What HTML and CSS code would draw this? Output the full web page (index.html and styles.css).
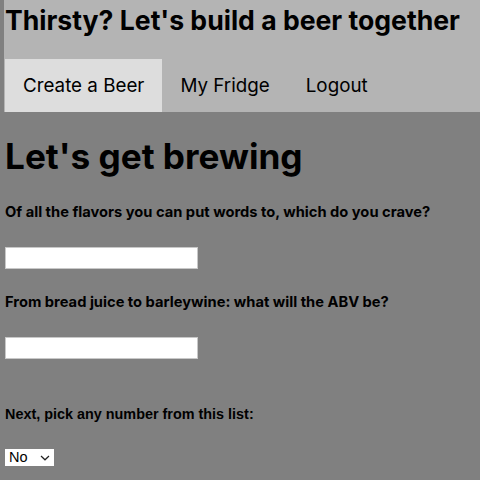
FILE: index.html
```html
<!DOCTYPE html>
<html lang="en">
<head>
<meta charset="utf-8">
<title>Let's get brewing</title>
<link rel="stylesheet" href="styles.css">
</head>
<body>
<header class="site-header">
  <h1 class="site-title">Thirsty? Let's build a beer together</h1>
  <nav class="site-nav">
    <a class="nav-link active" href="#">Create a Beer</a>
    <a class="nav-link" href="#">My Fridge</a>
    <a class="nav-link" href="#">Logout</a>
  </nav>
</header>
<main class="content">
  <h2 class="page-title">Let's get brewing</h2>
  <form class="beer-form">
    <label class="question" for="flavor">Of all the flavors you can put words to, which do you crave?</label>
    <input class="text-input" id="flavor" type="text">
    <label class="question" for="abv">From bread juice to barleywine: what will the ABV be?</label>
    <input class="text-input" id="abv" type="text">
    <label class="question question-alt" for="num">Next, pick any number from this list:</label>
    <select class="pick" id="num">
      <option>No</option>
    </select>
  </form>
</main>
</body>
</html>
```
FILE: styles.css
```css
html, body {
  margin: 0;
  padding: 0;
}
body {
  background: #808080;
  font-family: Inter, "Liberation Sans", sans-serif;
  color: #000;
  padding-left: 4px;
}
.site-header {
  background: #b4b4b4;
  padding-left: 1px;
}
.site-title {
  margin: 0;
  font-size: 26.6px;
  font-weight: 700;
  line-height: 40px;
  padding-bottom: 19px;
  white-space: nowrap;
}
.site-nav {
  display: flex;
  height: 53px;
}
.nav-link {
  display: block;
  padding: 0 18px;
  line-height: 53px;
  font-size: 18.8px;
  color: #000;
  text-decoration: none;
}
.nav-link.active {
  background: #dddddd;
}
.content {
  padding-left: 1px;
}
.page-title {
  margin: 22px 0 0;
  font-size: 35.2px;
  font-weight: 700;
  line-height: 44px;
}
.beer-form {
  display: flex;
  flex-direction: column;
  align-items: flex-start;
}
.question {
  display: block;
  font-size: 14.7px;
  font-weight: 700;
  line-height: 18px;
  margin-top: 25px;
}
.text-input + .question {
  margin-top: 24px;
}
.question-alt {
  font-family: "Liberation Sans", Arial, sans-serif;
  font-size: 14.4px;
}
.text-input + .question-alt {
  margin-top: 46px;
}
.text-input {
  margin-top: 26px;
  width: 193px;
  height: 22px;
  box-sizing: border-box;
  border: 1px solid #c8c8c8;
  background: #fff;
  padding: 0 3px;
}
.pick {
  -webkit-appearance: none;
  appearance: none;
  margin-top: 26px;
  width: 49px;
  height: 17px;
  box-sizing: border-box;
  border: none;
  border-radius: 0;
  background: #fff url("data:image/svg+xml,%3Csvg xmlns='http://www.w3.org/2000/svg' width='10' height='6' viewBox='0 0 10 6'%3E%3Cpath d='M1 1 5 4.8 9 1' fill='none' stroke='%23222' stroke-width='1.2'/%3E%3C/svg%3E") no-repeat 35px 6px;
  font-family: "Liberation Sans", Arial, sans-serif;
  font-size: 14.5px;
  line-height: 17px;
  color: #000;
  padding: 0 0 0 4px;
}
```
